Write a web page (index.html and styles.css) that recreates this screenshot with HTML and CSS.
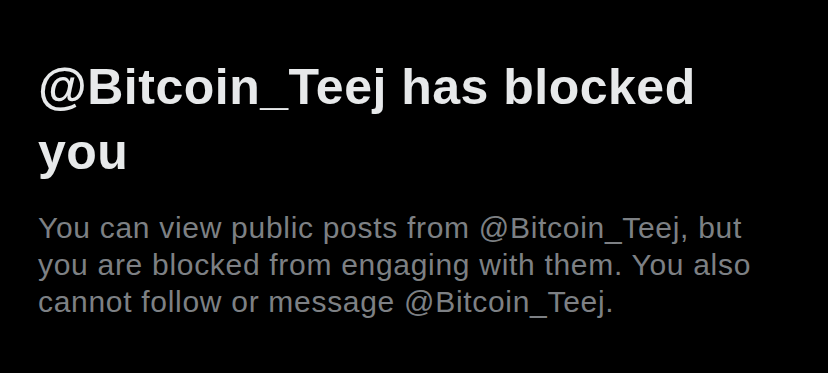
FILE: index.html
```html
<!DOCTYPE html>
<html lang="en">
<head>
    <meta charset="UTF-8">
    <meta name="viewport" content="width=device-width, initial-scale=1.0">
    <title>Blocked</title>
    <link rel="stylesheet" href="styles.css">
</head>
<body>
    <div class="blocked">
        <h1 class="blocked-title">@Bitcoin_Teej has blocked you</h1>
        <p class="blocked-text">You can view public posts from @Bitcoin_Teej, but you are blocked from engaging with them. You also cannot follow or message @Bitcoin_Teej.</p>
    </div>
</body>
</html>
```

FILE: styles.css
```css
html, body {
    background: #000;
}
body {
    margin: 0;
    font-family: "Liberation Sans", Arial, sans-serif;
}
.blocked {
    padding: 55px 0 0 38px;
    width: 740px;
}
.blocked-title {
    margin: 0;
    font-size: 50px;
    line-height: 65px;
    letter-spacing: 0.5px;
    font-weight: bold;
    color: #e7e9ea;
}
.blocked-text {
    margin: 24px 0 0;
    max-width: 732px;
    font-size: 30px;
    line-height: 37px;
    letter-spacing: 0.7px;
    color: #7d8084;
}
```
